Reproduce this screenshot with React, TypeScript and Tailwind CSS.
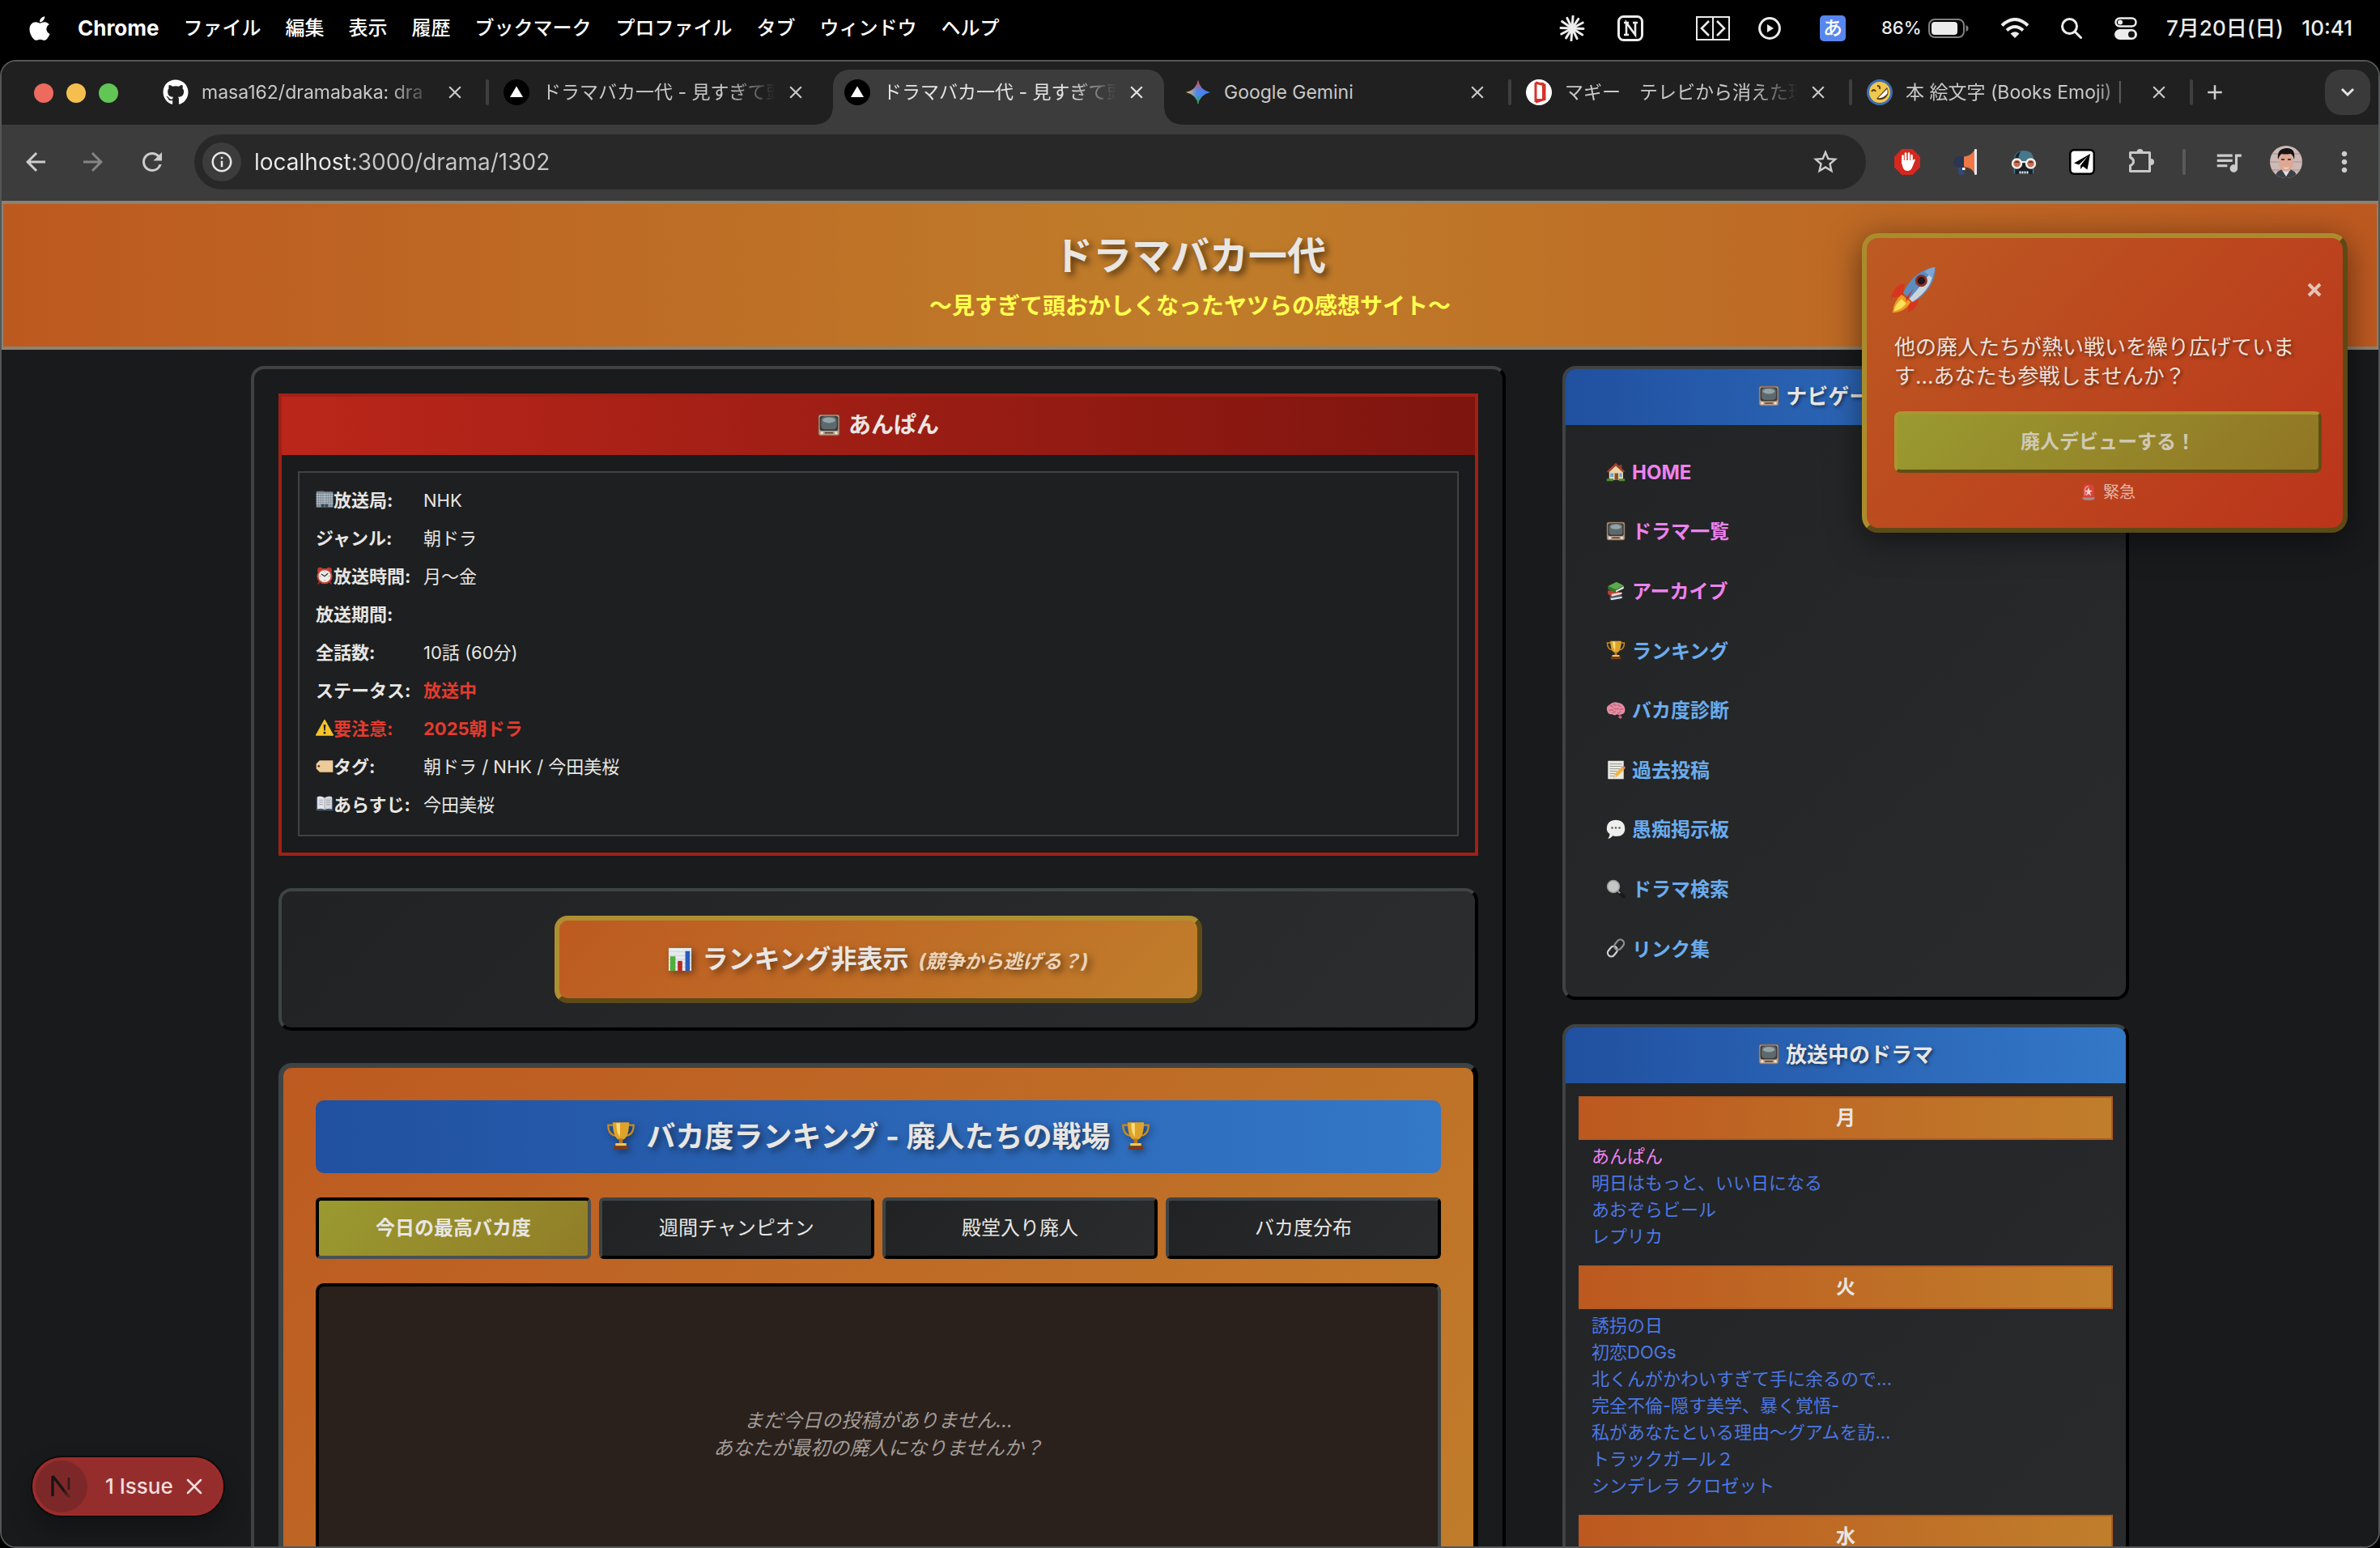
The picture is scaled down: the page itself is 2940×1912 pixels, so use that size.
import React from "react";
import { FaApple, FaGithub } from "react-icons/fa";
import {
  MdAdd,
  MdArrowBack,
  MdArrowForward,
  MdClose,
  MdInfoOutline,
  MdMoreVert,
  MdQueueMusic,
  MdRefresh,
  MdStarBorder,
} from "react-icons/md";

/* ---------- pictograms ---------- */

const art: Record<string, React.ReactNode> = {
  tv: (
    <>
      <rect x="1" y="1" width="30" height="30" rx="3" fill="#8a6a55" />
      <rect x="2" y="2" width="28" height="28" rx="2" fill="#b9a08c" />
      <rect x="3" y="3" width="26" height="21" rx="3" fill="#3c3a38" />
      <rect x="5" y="4" width="22" height="18" rx="5" fill="#5c6a6e" />
      <ellipse cx="16" cy="9" rx="9" ry="4" fill="#93a3a6" />
      <circle cx="6" cy="27" r="2" fill="#f0e2d0" />
      <circle cx="26" cy="27" r="2" fill="#f0e2d0" />
      <path d="M10 27h12" stroke="#5d4334" strokeWidth="2" />
    </>
  ),
  office: (
    <>
      <rect x="1" y="2" width="30" height="28" fill="#8b99a3" />
      <path d="M2 2h13v-1h-13z" fill="#b98d80" />
      <path d="M1 7h30M1 11h30M1 15h30M1 19h30M1 23h30" stroke="#d3dde3" strokeWidth="1.300" />
      <path d="M5 3v25M9 3v25M13 3v20M19 3v20M23 3v25M27 3v25" stroke="#6b7b87" strokeWidth="1" />
      <rect x="10" y="24" width="12" height="6" fill="#3d4952" />
      <path d="M16 24v6" stroke="#9fb0bb" />
    </>
  ),
  clock: (
    <>
      <circle cx="8" cy="6" r="5" fill="#b93a2f" />
      <circle cx="24" cy="6" r="5" fill="#b93a2f" />
      <path d="M7 27l-3 4M25 27l3 4" stroke="#8e2a22" strokeWidth="3" />
      <circle cx="16" cy="17" r="14" fill="#c8443a" />
      <circle cx="16" cy="17" r="11" fill="#efece6" />
      <path d="M10 13l6 4 6-5" stroke="#2b2b2b" strokeWidth="1.800" fill="none" />
      <path d="M16 8v2M16 24v2M7 17h2M23 17h2" stroke="#777" strokeWidth="1.200" />
    </>
  ),
  warning: (
    <>
      <path d="M16 2L31 29H1z" fill="#f5c32c" stroke="#f5c32c" strokeWidth="2" strokeLinejoin="round" />
      <path d="M14 10h4l-1 11h-2z" fill="#222" />
      <circle cx="16" cy="25" r="2" fill="#222" />
    </>
  ),
  tag: (
    <>
      <path d="M7 6h24v21H7L1 21v-9z" fill="#eecb98" />
      <circle cx="5.500" cy="16.500" r="2" fill="#5a3b20" />
      <path d="M7 27h24" stroke="#c89e66" strokeWidth="1.500" />
    </>
  ),
  book: (
    <>
      <path d="M1 4h30v24H1z" fill="#47596e" />
      <path d="M3 3q7-2 13 2v21q-6-3-13-1z" fill="#e3e5e8" />
      <path d="M29 3q-7-2-13 2v21q6-3 13-1z" fill="#d3d6da" />
      <path d="M6 9h7M6 13h7M6 17h7M19 9h7M19 13h7M19 17h7" stroke="#8d959d" strokeWidth="1.200" />
      <path d="M16 5v21" stroke="#8d959d" />
    </>
  ),
  house: (
    <>
      <rect x="22" y="4" width="4" height="8" fill="#8d3a2a" />
      <path d="M5 15L16 4l12 11v14H5z" fill="#e9d6ae" />
      <path d="M16 1L1 15l3 2L16 6l12 11 3-2z" fill="#a4412d" />
      <rect x="14" y="18" width="6" height="11" fill="#8a5128" />
      <rect x="7" y="18" width="5" height="6" fill="#6ba4cf" />
      <rect x="22" y="18" width="4" height="6" fill="#6ba4cf" />
      <path d="M1 29h11M21 29h10" stroke="#4f8a35" strokeWidth="4" />
    </>
  ),
  books: (
    <>
      <path d="M5 25l19-3 4 5-19 4z" fill="#46546e" />
      <path d="M7 28l19-3v3l-18 3z" fill="#dbe0e6" />
      <path d="M3 15l18 2 6 4-18 4-6-4z" fill="#c33c30" />
      <path d="M9 21l17-3v3l-17 4z" fill="#f2ded8" />
      <path d="M3 8L17 1l12 6-13 7z" fill="#5cab4b" />
      <path d="M3 8l13 6v5L3 13z" fill="#33792c" />
      <path d="M16 15l13-7v4l-13 6z" fill="#e2e8dc" />
    </>
  ),
  trophy: (
    <>
      <path d="M8 4H2q0 11 9 12M24 4h6q0 11-9 12" stroke="#c98a1d" strokeWidth="2" fill="none" />
      <path d="M7 1h18q0 15-6 19h-6Q7 16 7 1z" fill="#dfa32b" />
      <path d="M11 2h4v15q-4-4-4-15z" fill="#fbdc7a" />
      <path d="M14 19h4v6h-4z" fill="#b97716" />
      <path d="M10 24h12v3H10z" fill="#f0c65a" />
      <path d="M8 27h16v4H8z" fill="#7c3a17" />
    </>
  ),
  brain: (
    <>
      <path d="M22 24q5 2 4 5-3 3-6-1z" fill="#b8637a" />
      <path d="M2 18Q-1 10 6 7 12 1 20 4q9 1 11 10 1 8-5 9-4 2-8 0-4 3-8 0-6 1-8-5z" fill="#e58ca3" />
      <path d="M6 9q4-1 5 3M12 5q1 4 6 3M20 6q0 4 5 4M5 17q4-3 7 0M13 13q4 3 8 0M22 16q3-3 7-1M11 21q1-3 5-2M19 21q3 0 5-3" stroke="#bd5f79" strokeWidth="1.500" fill="none" />
    </>
  ),
  memo: (
    <>
      <path d="M3 1h26v30H3z" fill="#e9e8e2" />
      <path d="M6 6h20M6 10h20M6 14h17M6 18h12M6 22h9M6 26h8" stroke="#9a9a96" strokeWidth="1.300" />
      <path d="M14 23L26 11l4 4-12 12-6 2z" fill="#efb53c" />
      <path d="M26 11l3-2 3 3-2 3z" fill="#e07a85" />
      <path d="M14 23l4 4-6 2z" fill="#e7cfa5" />
    </>
  ),
  speech: (
    <>
      <path d="M16 1q15 1 15 14T16 28q-3 0-5-1-3 4-8 5 3-4 3-8Q1 21 1 15 1 2 16 1z" fill="#eeeeec" />
      <circle cx="10" cy="14" r="1.600" fill="#555" />
      <circle cx="16" cy="14" r="1.600" fill="#555" />
      <circle cx="22" cy="14" r="1.600" fill="#555" />
    </>
  ),
  search: (
    <>
      <path d="M20 20l9 9" stroke="#17191a" strokeWidth="6" strokeLinecap="round" />
      <path d="M19 19l4 4" stroke="#8c8c8c" strokeWidth="3" />
      <circle cx="12" cy="12" r="11" fill="#9a9a9a" />
      <circle cx="12" cy="12" r="9" fill="#c4c6c6" />
    </>
  ),
  link: (
    <g fill="none" strokeWidth="3">
      <rect x="-9" y="-6" width="18" height="12" rx="6" transform="translate(10.500 21.500) rotate(-50)" stroke="#d0d2d3" />
      <rect x="-9" y="-6" width="18" height="12" rx="6" transform="translate(21.500 10.500) rotate(-50)" stroke="#8d9194" />
    </g>
  ),
  chart: (
    <>
      <rect x="1" y="1" width="30" height="30" fill="#e6ebf0" />
      <path d="M1 6h30M1 11h30M1 16h30M1 21h30M1 26h30" stroke="#c8d3dd" />
      <rect x="3" y="12" width="7" height="19" fill="#4fae3c" />
      <rect x="13" y="18" width="6" height="13" fill="#b72a20" />
      <rect x="23" y="5" width="6" height="26" fill="#2a5cb8" />
    </>
  ),
  rocket: (
    <>
      <path d="M10 12q-6 0-9 9l8-1zM19 21q1 6-7 10l1-9z" fill="#d8351e" />
      <path d="M8 19l6 5q-4 7-12 7 1-8 6-12z" fill="#f39a1f" />
      <path d="M8 22l3 3q-3 4-8 5 1-5 5-8z" fill="#fbe05a" />
      <path d="M30 1q1 13-14 23l-7-6Q16 3 30 1z" fill="#5b8cc2" />
      <path d="M29 2q0 13-14 22l-2-2Q22 12 29 2z" fill="#c9d3da" />
      <path d="M30 1q0 3-2 7l-5-4q4-3 7-3z" fill="#7fa6d1" />
      <circle cx="21" cy="10" r="4" fill="#8e2f25" />
      <circle cx="21" cy="10" r="2.500" fill="#201518" />
      <path d="M11 21l5-6-5 9z" fill="#c7332a" />
    </>
  ),
  siren: (
    <>
      <path d="M5 25V8q1-8 11-8t11 8v17z" fill="#d8443c" />
      <path d="M9 22V10q2-6 7-6" stroke="#f5a49d" strokeWidth="2" fill="none" />
      <path d="M16 6l2 6 6 1-5 3 2 7-5-4-5 4 2-7-5-3 6-1z" fill="#f7d3cf" />
      <path d="M4 26h24v3q-4 3-12 3T4 29z" fill="#a58a8a" />
    </>
  ),
};

function Emoji({ name, label, className }: { name: string; label: string; className?: string }) {
  return (
    <svg
      viewBox="0 0 32 32"
      role="img"
      aria-label={label}
      className={"inline-block size-[1em] shrink-0 align-[-0.12em] " + (className ?? "")}
    >
      {art[name]}
    </svg>
  );
}

/* ---------- macOS menu bar ---------- */

const menus = ["ファイル", "編集", "表示", "履歴", "ブックマーク", "プロファイル", "タブ", "ウィンドウ", "ヘルプ"];

function Burst() {
  const rays = [0, 30, 58, 88, 118, 150, 180, 208, 238, 268, 300, 330];
  return (
    <svg viewBox="-16 -16 32 32" className="size-8">
      {rays.map((a, i) => (
        <path key={a} d={i % 2 ? "M0 0V-14" : "M0 0V-15"} stroke="#ececec" strokeWidth="3" strokeLinecap="round" transform={`rotate(${a + 4})`} />
      ))}
    </svg>
  );
}

function MenuBar() {
  return (
    <div className="flex h-[74px] shrink-0 items-center justify-between bg-black pr-[34px] pb-1 pl-8 text-2xl text-[#ececec]">
      <nav className="flex items-center gap-[30px]">
        <button aria-label="Apple">
          <FaApple className="size-[34px] text-white" />
        </button>
        <button className="text-[26px] font-bold text-white">Chrome</button>
        {menus.map((m) => (
          <button key={m} className="font-medium whitespace-nowrap text-white">
            {m}
          </button>
        ))}
      </nav>
      <div className="flex items-center">
        <Burst />
        <svg viewBox="0 0 32 32" className="ml-10 size-8" fill="none" stroke="#ececec">
          <rect x="1.500" y="1.500" width="29" height="29" rx="6" strokeWidth="3" />
          <path d="M8 9h6M19 9h6M8 24h6M11 24V9l11 15V9" strokeWidth="2.600" />
        </svg>
        <svg viewBox="0 0 42 30" className="ml-[65px] h-[30px] w-[42px]" fill="none" stroke="#ececec" strokeWidth="2">
          <path d="M1 1h40v28H1zM21 1v28" />
          <path d="M16 6L7 15l9 9M26 6l9 9-9 9" strokeWidth="2.600" />
        </svg>
        <svg viewBox="0 0 28 28" className="ml-[35px] size-7" fill="none" stroke="#ececec" strokeWidth="3">
          <circle cx="14" cy="14" r="12.400" />
          <path d="M11 9l8 5-8 5z" fill="#ececec" stroke="none" />
        </svg>
        <span className="ml-12 flex size-8 items-center justify-center rounded-[5px] bg-[#5787ee] text-[24px] font-medium text-white">あ</span>
        <span className="ml-11 w-[52px] text-[22px] font-medium">86%</span>
        <svg viewBox="0 0 50 24" className="ml-1.5 h-6 w-[50px]">
          <rect x="1" y="1" width="43" height="22" rx="7" fill="none" stroke="#808080" strokeWidth="2" />
          <rect x="4" y="4" width="32" height="16" rx="4" fill="#ececec" />
          <path d="M46.500 8q3 1 3 4t-3 4z" fill="#808080" />
        </svg>
        <svg viewBox="0 0 36 26" className="ml-[39px] h-[26px] w-9" fill="none" stroke="#ececec" strokeWidth="4">
          <path d="M2 9.500q16-15 32 0M8 15.500q10-9 20 0" />
          <path d="M18 25l-5.500-5.500q5.500-4.500 11 0z" fill="#ececec" stroke="none" />
        </svg>
        <svg viewBox="0 0 26 26" className="ml-[39px] size-[26px]" fill="none" stroke="#ececec" strokeWidth="3" strokeLinecap="round">
          <circle cx="10.500" cy="10.500" r="9" />
          <path d="M17 17l7.500 7.500" />
        </svg>
        <svg viewBox="0 0 28 28" className="ml-10 size-7">
          <rect x="1.500" y="1.500" width="25" height="10" rx="5" fill="none" stroke="#ececec" strokeWidth="2.500" />
          <circle cx="7" cy="6.500" r="3" fill="#ececec" />
          <rect x="0" y="15" width="28" height="13" rx="6.500" fill="#ececec" />
          <circle cx="21" cy="21.500" r="4" fill="#111" />
        </svg>
        <span className="ml-9 flex justify-end gap-3.5 text-[26px] font-medium whitespace-nowrap">
          <span className="w-[146px]">7月20日(日)</span>
          <span className="w-[70px] text-right">10:41</span>
        </span>
      </div>
    </div>
  );
}

/* ---------- browser chrome ---------- */

function VercelIcon() {
  return (
    <svg viewBox="0 0 32 32" className="size-8">
      <circle cx="16" cy="16" r="16" fill="#000" />
      <path d="M16 8.500l8 13.500H8z" fill="#fff" />
    </svg>
  );
}

function GeminiIcon() {
  return (
    <svg viewBox="0 0 32 32" className="size-8">
      <defs>
        <linearGradient id="gemA" x1="0" y1="0.500" x2="1" y2="0.500">
          <stop offset="0" stopColor="#f6c445" />
          <stop offset="0.450" stopColor="#4f87ee" />
          <stop offset="1" stopColor="#3f7df0" />
        </linearGradient>
        <linearGradient id="gemB" x1="0" y1="0" x2="0" y2="1">
          <stop offset="0" stopColor="#ea4a3d" />
          <stop offset="0.450" stopColor="#ea4a3d" stopOpacity="0" />
          <stop offset="0.600" stopColor="#33a852" stopOpacity="0" />
          <stop offset="0.900" stopColor="#33a852" />
        </linearGradient>
      </defs>
      <path d="M16 1q2 12 15 15-13 3-15 15Q14 19 1 16 14 13 16 1z" fill="url(#gemA)" />
      <path d="M16 1q2 12 15 15-13 3-15 15Q14 19 1 16 14 13 16 1z" fill="url(#gemB)" />
    </svg>
  );
}

function DoorIcon() {
  return (
    <svg viewBox="0 0 32 32" className="size-8">
      <circle cx="16" cy="16" r="16" fill="#fff" />
      <path d="M12 4v24M12 4l11 3v19M12 28l12-4" stroke="#d5322b" strokeWidth="3" fill="none" />
      <path d="M12 5h9v20h-9" stroke="#d5322b" strokeWidth="2" fill="none" />
    </svg>
  );
}

function LaughIcon() {
  return (
    <svg viewBox="0 0 32 32" className="size-8">
      <circle cx="16" cy="16" r="16" fill="#3f6eb0" />
      <circle cx="16" cy="16" r="13" fill="#f0c84d" />
      <path d="M6 15q3-4 5 0M13 8q4 0 3 4" stroke="#5a3a14" strokeWidth="2" fill="none" />
      <path d="M12 24L25 10q4 8-2 13-6 4-11 1z" fill="#5a3216" />
      <path d="M14 23L25 12q2 5-2 8-4 4-9 3z" fill="#fff" />
    </svg>
  );
}

const tabs = [
  { title: "masa162/dramabaka: dra", icon: <FaGithub className="size-8 text-white" />, fade: true, sep: true },
  { title: "ドラマバカ一代 - 見すぎて頭", icon: <VercelIcon />, fade: true },
  { title: "ドラマバカ一代 - 見すぎて頭", icon: <VercelIcon />, fade: true, active: true },
  { title: "Google Gemini", icon: <GeminiIcon />, sep: true },
  { title: "マギー　テレビから消えた理", icon: <DoorIcon />, fade: true, sep: true },
  { title: "本 絵文字 (Books Emoji) |", icon: <LaughIcon />, fade: true, sep: true },
];

function TabStrip() {
  return (
    <div className="flex h-[78px] shrink-0 items-end bg-[#202020] pr-2.5 pl-10">
      <div className="mb-[27px] flex w-[139px] shrink-0 gap-4">
        <button aria-label="閉じる" className="size-6 rounded-full bg-[#ed6a5f]" />
        <button aria-label="しまう" className="size-6 rounded-full bg-[#f5bf4f]" />
        <button aria-label="拡大" className="size-6 rounded-full bg-[#62c655]" />
      </div>
      <div role="tablist" className="flex min-w-0 items-end">
        {tabs.map((t, i) => (
          <div key={i} className="relative flex h-[68px] w-[421px] min-w-0 shrink items-center pr-[27px] pb-3 pl-5">
            {t.active && (
              <>
                <div className="absolute inset-x-1.5 inset-y-0 rounded-t-[20px] bg-[#3c3c3c]" />
                <div className="absolute bottom-0 -left-3.5 size-5 bg-[radial-gradient(circle_at_top_left,transparent_19px,#3c3c3c_20px)]" />
                <div className="absolute -right-3.5 bottom-0 size-5 bg-[radial-gradient(circle_at_top_right,transparent_19px,#3c3c3c_20px)]" />
              </>
            )}
            <span className="relative shrink-0">{t.icon}</span>
            <button
              role="tab"
              aria-selected={!!t.active}
              className={
                "relative ml-4 min-w-0 flex-1 overflow-hidden text-left text-[23px] leading-9 whitespace-nowrap " +
                (t.active ? "text-[#e4e4e4] " : "text-[#c9c9c9] ") +
                (t.fade ? "[mask-image:linear-gradient(to_right,black_80%,transparent)]" : "")
              }
            >
              {t.title}
            </button>
            <button aria-label="タブを閉じる" className={"relative ml-3 " + (t.active ? "text-[#e4e4e4]" : "text-[#c9c9c9]")}>
              <MdClose className="size-[26px]" />
            </button>
            {t.sep && <span className="absolute top-3 -right-0.5 h-8 w-1 rounded-full bg-[#3f3f3f]" />}
          </div>
        ))}
      </div>
      <button aria-label="新しいタブ" className="mb-[25px] ml-3.5 text-[#d0d0d0]">
        <MdAdd className="size-[30px]" />
      </button>
      <button aria-label="タブを検索" className="mb-3 ml-auto flex size-14 shrink-0 items-center justify-center rounded-[20px] bg-[#3a3a3a]">
        <svg viewBox="0 0 18 12" className="h-3 w-[18px]" fill="none" stroke="#e4e4e4" strokeWidth="3">
          <path d="M2 2l7 7 7-7" />
        </svg>
      </button>
    </div>
  );
}

function Toolbar() {
  return (
    <div className="flex h-[94px] shrink-0 items-center bg-[#3c3c3c] pb-0.5 pl-6 text-[#cccccc]">
      <button aria-label="戻る">
        <MdArrowBack className="size-9" />
      </button>
      <button aria-label="進む" className="ml-[35px] text-[#858585]">
        <MdArrowForward className="size-9" />
      </button>
      <button aria-label="再読み込み" className="ml-[37px]">
        <MdRefresh className="size-9" />
      </button>
      <form className="ml-[34px] flex h-[68px] min-w-0 flex-1 items-center rounded-full bg-[#282828] pr-8 pl-2.5">
        <button type="button" aria-label="サイト情報" className="flex size-12 shrink-0 items-center justify-center rounded-full bg-[#3c3c3c] text-[#e8e8e8]">
          <MdInfoOutline className="size-[30px]" />
        </button>
        <input
          aria-label="アドレス"
          defaultValue="localhost:3000/drama/1302"
          className="ml-4 h-12 min-w-0 flex-1 bg-[linear-gradient(90deg,#ececec_121px,#c7c7c7_121px)] bg-clip-text text-[28px] text-transparent outline-none"
        />
        <button type="button" aria-label="ブックマークに追加">
          <MdStarBorder className="size-9" />
        </button>
      </form>
      <div className="ml-[35px] flex items-center gap-10">
        <button aria-label="広告ブロッカー">
          <svg viewBox="0 0 32 32" className="size-8">
            <path d="M9.500 0h13L32 9.500v13L22.500 32h-13L0 22.500v-13z" fill="#d5281e" />
            <path d="M10.500 18V8.500M14 16V5.500M18 16V5.500M21.500 17V8" stroke="#fff" strokeWidth="2.600" strokeLinecap="round" />
            <path d="M9.200 14h13.500l2-1.500q1.500 0 .800 2l-3.500 8.500q-1.500 4-5.500 4-4.500 0-6-4.500-1.300-4-1.300-8.500z" fill="#fff" />
          </svg>
        </button>
        <button aria-label="音声読み上げ">
          <svg viewBox="0 0 32 32" className="size-8">
            <path d="M6 20h7l1 12H8z" fill="#2f4a78" />
            <path d="M7 9h8v14H7q-6-1-6-7t6-7z" fill="#2b3650" />
            <path d="M14 9.500Q24 8 27 1v29q-3-7-13-8z" fill="#ee7846" />
            <path d="M27 1q0-1 1.500-1T30 1v30q0 1-1.500 1T27 31z" fill="#e4ebf4" />
            <rect x="12" y="23" width="3.500" height="3" fill="#fff" />
          </svg>
        </button>
        <button aria-label="シークレット">
          <svg viewBox="0 0 32 32" className="size-8">
            <path d="M4 16Q3 2 16 2t12 14z" fill="#44788a" />
            <path d="M5 14Q5 5 12 3 9 8 9 14z" fill="#18242c" />
            <path d="M4 18h24v13H4z" fill="#17222a" />
            <path d="M4.500 22v8.500M27.500 22v8.500" stroke="#44788a" strokeWidth="1.500" />
            <path d="M13 16h6" stroke="#f3efec" strokeWidth="2" />
            <circle cx="7.500" cy="18" r="5.500" fill="#cf6a50" stroke="#f3efec" strokeWidth="2.400" />
            <circle cx="24.500" cy="18" r="5.500" fill="#cf6a50" stroke="#f3efec" strokeWidth="2.400" />
            <path d="M4 17a4 4 0 017 0zM21 17a4 4 0 017 0z" fill="#5a3530" />
            <path d="M10.500 29h11.500" stroke="#e8f0f2" strokeWidth="3" strokeDasharray="2 1" />
          </svg>
        </button>
        <button aria-label="共有">
          <svg viewBox="0 0 32 32" className="size-8">
            <rect width="32" height="32" rx="6" fill="#000" />
            <rect x="2.500" y="2.500" width="27" height="27" rx="4" fill="#fff" />
            <path d="M26 6L6 17.500l6 2L23 9l-9 11.500V25l3-3.500 5.500 4z" fill="#000" />
          </svg>
        </button>
        <button aria-label="拡張機能">
          <svg viewBox="0 0 34 36" className="h-9 w-[34px]" fill="none" stroke="#c9c9c9" strokeWidth="3" strokeLinejoin="round">
            <path d="M3.500 6.500h24v23h-24v-7q4-1.500 4-5t-4-5z" />
            <path d="M10.500 6a4 4 0 018 0zM28 14a4 4 0 010 8z" transform="translate(1 0)" fill="#c9c9c9" stroke="none" />
          </svg>
        </button>
      </div>
      <span className="ml-[34px] h-8 w-1 rounded-full bg-[#5a5a5a]" />
      <button aria-label="メディア" className="ml-[34px]">
        <MdQueueMusic className="size-[38px]" />
      </button>
      <button aria-label="プロフィール" className="ml-8 size-10 overflow-hidden rounded-full">
        <svg viewBox="0 0 40 40" className="size-10">
          <rect width="40" height="40" fill="#cdb9b6" />
          <path d="M0 10h40M0 20h40M0 30h40" stroke="#a58f8d" />
          <path d="M6 40q2-12 14-11 12-1 14 11z" fill="#3b4147" />
          <path d="M15 30l5 8 5-8z" fill="#dde3ea" />
          <ellipse cx="20" cy="20" rx="9" ry="12" fill="#dfa894" />
          <path d="M10 17Q8 4 20 3t10 14q-2-7-5-7-6 1-10 0-3 1-5 7z" fill="#161414" />
          <path d="M16 26q4 3 8 0-4 5-8 0z" fill="#fff" />
          <path d="M14 17h4M22 17h4" stroke="#2a1a16" strokeWidth="1.500" />
        </svg>
      </button>
      <button aria-label="メニュー" className="mr-[22px] ml-8">
        <MdMoreVert className="size-10" />
      </button>
    </div>
  );
}

/* ---------- page ---------- */

const facts: { icon?: [string, string]; label: string; value: string; alert?: boolean; hot?: boolean }[] = [
  { icon: ["office", "🏢"], label: "放送局:", value: "NHK" },
  { label: "ジャンル:", value: "朝ドラ" },
  { icon: ["clock", "⏰"], label: "放送時間:", value: "月〜金" },
  { label: "放送期間:", value: "" },
  { label: "全話数:", value: "10話 (60分)" },
  { label: "ステータス:", value: "放送中", hot: true },
  { icon: ["warning", "⚠️"], label: "要注意:", value: "2025朝ドラ", hot: true, alert: true },
  { icon: ["tag", "🏷️"], label: "タグ:", value: "朝ドラ / NHK / 今田美桜" },
  { icon: ["book", "📖"], label: "あらすじ:", value: "今田美桜" },
];

const navItems: [string, string, string, boolean][] = [
  ["house", "🏠", "HOME", true],
  ["tv", "📺", "ドラマ一覧", true],
  ["books", "📚", "アーカイブ", true],
  ["trophy", "🏆", "ランキング", false],
  ["brain", "🧠", "バカ度診断", false],
  ["memo", "📝", "過去投稿", false],
  ["speech", "💬", "愚痴掲示板", false],
  ["search", "🔍", "ドラマ検索", false],
  ["link", "🔗", "リンク集", false],
];

const schedule = [
  { day: "月", shows: ["あんぱん", "明日はもっと、いい日になる", "あおぞらビール", "レプリカ"] },
  {
    day: "火",
    shows: [
      "誘拐の日",
      "初恋DOGs",
      "北くんがかわいすぎて手に余るので...",
      "完全不倫-隠す美学、暴く覚悟-",
      "私があなたといる理由〜グアムを訪...",
      "トラックガール２",
      "シンデレラ クロゼット",
    ],
  },
  { day: "水", shows: [] },
];

const rankTabs = ["今日の最高バカ度", "週間チャンピオン", "殿堂入り廃人", "バカ度分布"];

function SideBox({ title, children }: { title: string; children: React.ReactNode }) {
  return (
    <section className="overflow-hidden rounded-2xl border-4 border-t-[#3e4345] border-r-black border-b-black border-l-[#3e4345] bg-[linear-gradient(135deg,#212324,#2a2b2c)]">
      <h2 className="bg-[linear-gradient(90deg,#2150a0,#3478c8)] py-4 text-center text-[26px] font-bold text-[#e8e6e3] [text-shadow:2px_2px_4px_rgba(0,0,0,0.5)]">
        <Emoji name="tv" label="📺" className="mr-2" />
        {title}
      </h2>
      {children}
    </section>
  );
}

function Toast() {
  return (
    <aside className="absolute top-10 right-[38px] w-[600px] rounded-[20px] border-6 border-t-[#aa8c2d] border-r-[#5d4916] border-b-[#5d4916] border-l-[#aa8c2d] bg-[linear-gradient(135deg,#bd5a22,#bb341b)] pt-[30px] pr-[26px] pb-[30px] pl-[34px] shadow-[0_8px_40px_rgba(0,0,0,0.5)]">
      <div className="mb-5 flex h-[67px] items-center justify-between">
        <Emoji name="rocket" label="🚀" className="-ml-1.5 size-[60px]" />
        <button aria-label="閉じる" className="text-[#e3c3b7]">
          <svg viewBox="0 0 18 18" className="size-[18px]" fill="none" stroke="currentColor" strokeWidth="4">
            <path d="M2 2l14 14M16 2L2 16" />
          </svg>
        </button>
      </div>
      <p className="text-[26px] text-[#efe0da] [text-shadow:2px_2px_4px_rgba(0,0,0,0.5)]">
        他の廃人たちが熱い戦いを繰り広げています...あなたも参戦しませんか？
      </p>
      <button className="mt-6 w-full rounded-lg border-4 border-t-[#aa962f] border-r-[#5d4f14] border-b-[#5d4f14] border-l-[#aa962f] bg-[linear-gradient(135deg,#9a9a30,#917524)] py-4 text-2xl leading-9 font-bold text-[#cfc8b4]">
        廃人デビューする！
      </button>
      <p className="mt-2.5 flex items-center justify-center gap-2 text-xl leading-[1.4] text-[#e5b7a8]">
        <Emoji name="siren" label="🚨" />
        緊急
      </p>
    </aside>
  );
}

function IssueBadge() {
  return (
    <div className="absolute bottom-[38px] left-[38px] flex h-[72px] w-[236px] items-center rounded-full border-2 border-[#a32b2b] bg-[#962d2d] pl-0.5 shadow-[0_0_0_2px_#0c0c0c,0_16px_32px_rgba(0,0,0,0.3)]">
      <button aria-label="Next.js" className="flex size-16 items-center justify-center rounded-full bg-[#7d2828]">
        <svg viewBox="0 0 26 28" className="h-7 w-[26px]" fill="none">
          <defs>
            <linearGradient id="nx" x1="0" y1="0" x2="1" y2="1">
              <stop offset="0.600" stopColor="#1c1414" />
              <stop offset="1" stopColor="#1c1414" stopOpacity="0.200" />
            </linearGradient>
          </defs>
          <path d="M2 26V1" stroke="#1c1414" strokeWidth="3.500" />
          <path d="M2 1l21 27" stroke="url(#nx)" strokeWidth="3.500" />
          <path d="M22 3v15" stroke="#3c1a1a" strokeWidth="3" />
        </svg>
      </button>
      <button className="ml-[22px] font-[Inter] text-[26px] leading-9 font-medium whitespace-nowrap text-[#f3dede]">1 Issue</button>
      <button aria-label="閉じる" className="ml-4 text-[#f3dede]">
        <svg viewBox="0 0 20 20" className="size-5" fill="none" stroke="currentColor" strokeWidth="2.500" strokeLinecap="round">
          <path d="M2 2l16 16M18 2L2 18" />
        </svg>
      </button>
    </div>
  );
}

function Page() {
  return (
    <div className="relative min-h-0 flex-1 overflow-hidden bg-[#181a1b] font-[Inter,'Noto_Sans_CJK_JP',sans-serif] leading-[1.4] text-[#e8e6e3]">
      <header className="border-x-2 border-y-4 border-[#8b8373] bg-[linear-gradient(90deg,#bd5920,#bf7d2a_50%,#bd5920)] py-[30px] text-center">
        <h1 className="text-5xl leading-[1.4] font-bold [text-shadow:4px_4px_8px_rgba(0,0,0,0.6)]">ドラマバカ一代</h1>
        <p className="mt-2.5 text-[28px] font-bold text-[#ffff50]">〜見すぎて頭おかしくなったヤツらの感想サイト〜</p>
      </header>

      <div className="mx-auto mt-5 grid max-w-[2320px] grid-cols-[minmax(0,1fr)_700px] gap-[70px]">
        <main className="rounded-2xl border-4 border-t-[#3e4446] border-r-black border-b-black border-l-[#3e4446] bg-[#191b1c] p-[30px]">
          <section className="border-4 border-[#a12016]">
            <h2 className="bg-[linear-gradient(90deg,#bb261a,#7e150f)] py-4 text-center text-[28px] font-bold">
              <Emoji name="tv" label="📺" className="mr-2.5" />
              あんぱん
            </h2>
            <div className="m-5 border-2 border-[#3e4446] bg-[#1d1f20] px-5 pt-[11px] pb-[13px]">
              <table className="w-full text-left text-[22px] leading-[31px]">
                <tbody>
                  {facts.map((f) => (
                    <tr key={f.label} className={f.alert ? "text-[#e33b2e]" : ""}>
                      <th scope="row" className="w-[133px] py-2 font-bold whitespace-nowrap">
                        {f.icon && <Emoji name={f.icon[0]} label={f.icon[1]} />}
                        {f.label}
                      </th>
                      <td className={"py-2 " + (f.hot ? "font-bold text-[#e33b2e]" : "")}>{f.value}</td>
                    </tr>
                  ))}
                </tbody>
              </table>
            </div>
          </section>

          <section className="mt-10 flex justify-center rounded-2xl border-4 border-t-[#3e4446] border-r-black border-b-black border-l-[#3e4446] bg-[linear-gradient(135deg,#202223,#2c2d2e)] p-[30px]">
            <button className="flex w-[800px] items-center justify-center rounded-2xl border-6 border-t-[#ae8f31] border-r-[#5d4a17] border-b-[#5d4a17] border-l-[#ae8f31] bg-[linear-gradient(135deg,#bd5a21,#c07e2b)] py-6 text-[32px] leading-[48px] font-bold [text-shadow:4px_4px_8px_rgba(0,0,0,0.5)]">
              <Emoji name="chart" label="📊" className="mr-3 size-[30px] drop-shadow-[3px_3px_4px_rgba(0,0,0,0.4)]" />
              <span>
                ランキング非表示
                <em className="ml-3 text-2xl leading-none text-[#ecd3b8]">(競争から逃げる？)</em>
              </span>
            </button>
          </section>

          <section className="mt-10 rounded-2xl border-6 border-t-[#3e4446] border-r-black border-b-black border-l-[#3e4446] bg-[linear-gradient(135deg,#bd5a21,#c07e2b)] p-10">
            <h2 className="rounded-[10px] bg-[linear-gradient(90deg,#2150a0,#3478c8)] py-5 text-center text-4xl leading-[1.4] font-bold [text-shadow:4px_4px_8px_rgba(0,0,0,0.5)]">
              <Emoji name="trophy" label="🏆" className="mr-3.5 drop-shadow-[3px_3px_4px_rgba(0,0,0,0.4)]" />
              バカ度ランキング - 廃人たちの戦場
              <Emoji name="trophy" label="🏆" className="ml-3.5 drop-shadow-[3px_3px_4px_rgba(0,0,0,0.4)]" />
            </h2>
            <div role="tablist" className="mt-[30px] grid grid-cols-4 gap-2.5 text-2xl">
              {rankTabs.map((t, i) => (
                <button
                  key={t}
                  role="tab"
                  aria-selected={i === 0}
                  className={
                    "rounded-md border-4 py-4 leading-9 " +
                    (i === 0
                      ? "border-t-black border-r-[#4b5052] border-b-[#4b5052] border-l-black bg-[linear-gradient(135deg,#9a9a30,#917d27)] font-bold"
                      : "border-t-[#3e4446] border-r-black border-b-black border-l-[#3e4446] bg-[linear-gradient(135deg,#202223,#2b2c2d)]")
                  }
                >
                  {t}
                </button>
              ))}
            </div>
            <div className="mt-[30px] rounded-[10px] border-4 border-t-black border-r-[#3e4446] border-b-[#3e4446] border-l-black bg-[#2a211d] px-10 pt-[149px] pb-[160px]">
              <p className="text-center text-2xl leading-[1.4] text-[#a39c96] italic">
                まだ今日の投稿がありません...
                <br />
                あなたが最初の廃人になりませんか？
              </p>
            </div>
          </section>
        </main>

        <div className="flex flex-col gap-[30px]">
          <SideBox title="ナビゲーション">
            <ul className="px-[50px] py-[22px] text-2xl leading-[1.4] font-bold">
              {navItems.map(([icon, label, text, visited]) => (
                <li key={text} className="py-5">
                  <a href="#" className={visited ? "text-[#ee82ee]" : "text-[#6aacee]"}>
                    <Emoji name={icon} label={label} className="mr-2" />
                    {text}
                  </a>
                </li>
              ))}
            </ul>
          </SideBox>
          <SideBox title="放送中のドラマ">
            <div className="p-4">
              {schedule.map((s) => (
                <div key={s.day} className="mb-5">
                  <h3 className="border-2 border-[#b05a24] bg-[linear-gradient(90deg,#bd5920,#c07e2b)] py-2 text-center text-2xl leading-[34px] font-bold">
                    {s.day}
                  </h3>
                  <ul className="px-4 pt-[5px] text-[22px] leading-[31px]">
                    {s.shows.map((show) => (
                      <li key={show} className="mb-0.5">
                        <a href="#" className={show === "あんぱん" ? "text-[#ee82ee]" : "text-[#4b78e6]"}>
                          {show}
                        </a>
                      </li>
                    ))}
                  </ul>
                </div>
              ))}
            </div>
          </SideBox>
        </div>
      </div>

      <Toast />
      <IssueBadge />
    </div>
  );
}

export default function App() {
  return (
    <div className="flex h-screen w-full flex-col overflow-hidden bg-black font-[Inter,'Noto_Sans_CJK_JP',sans-serif]">
      <MenuBar />
      <div className="flex min-h-0 flex-1 flex-col overflow-hidden rounded-[20px] border-2 border-[#545657]">
        <TabStrip />
        <Toolbar />
        <Page />
      </div>
    </div>
  );
}
